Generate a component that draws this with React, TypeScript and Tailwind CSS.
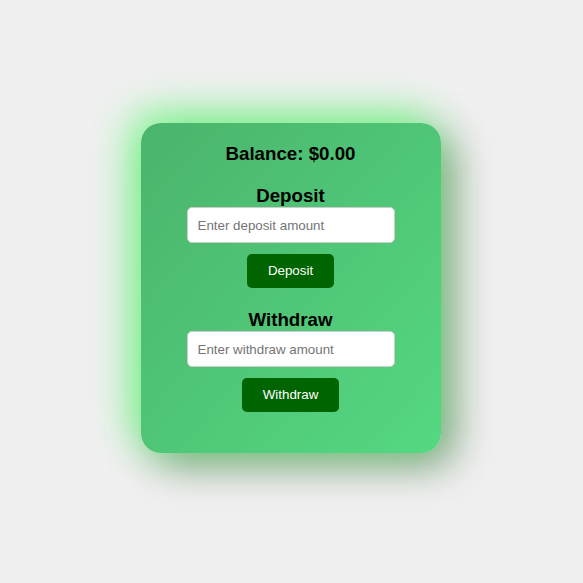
export default function App() {
  return (
    <div className="flex h-[583px] w-full items-start justify-center bg-[#f0f0f0] pr-[2px] pt-[123px] font-['Liberation_Sans',Arial,sans-serif]">
      <div className="flex w-[300px] flex-col items-center rounded-[20px] bg-gradient-to-br from-[#4ab46c] to-[#55d882] px-5 pb-[41px] pt-[19px] shadow-[-10px_-10px_40px_rgba(110,255,130,0.85),12px_12px_40px_rgba(0,70,0,0.5)]">
        <h2 className="text-[18.72px] leading-[23px] font-bold text-black">Balance: $0.00</h2>

        <h3 className="mt-[19px] text-[18.72px] leading-[23px] font-bold text-black">Deposit</h3>
        <input
          type="number"
          placeholder="Enter deposit amount"
          className="h-[36px] w-[208px] rounded-[5px] border border-[#cccccc] bg-white px-[10px] text-[13.33px] text-black placeholder:text-[#757575] outline-none"
        />
        <button className="mt-[11px] h-[34px] rounded-[5px] bg-[#006400] px-[20.5px] text-[13.33px] text-white">
          Deposit
        </button>

        <h3 className="mt-[20px] text-[18.72px] leading-[23px] font-bold text-black">Withdraw</h3>
        <input
          type="number"
          placeholder="Enter withdraw amount"
          className="h-[36px] w-[208px] rounded-[5px] border border-[#cccccc] bg-white px-[10px] text-[13.33px] text-black placeholder:text-[#757575] outline-none"
        />
        <button className="mt-[11px] h-[34px] rounded-[5px] bg-[#006400] px-[20.5px] text-[13.33px] text-white">
          Withdraw
        </button>
      </div>
    </div>
  );
}
